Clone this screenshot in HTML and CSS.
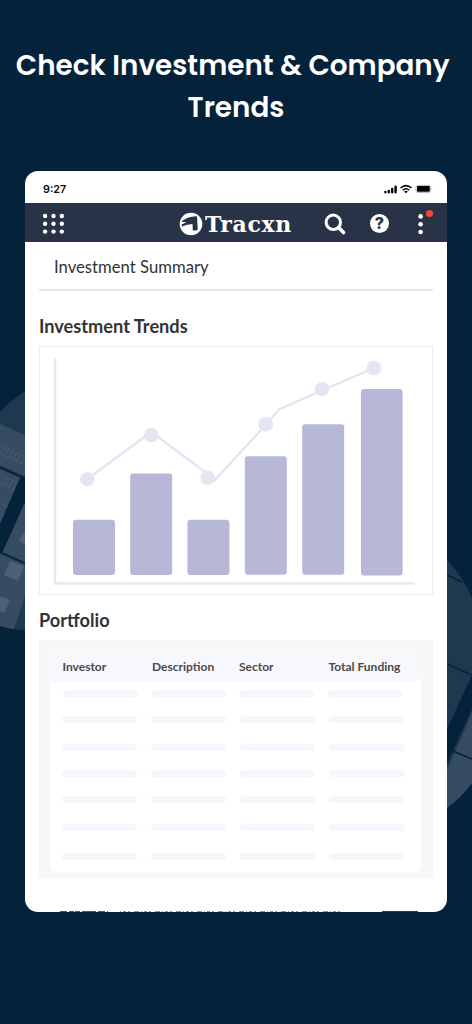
FILE: index.html
```html
<!DOCTYPE html>
<html lang="en">

<head>
    <meta charset="UTF-8">
    <title>Tracxn - Investment Trends</title>
    <meta name="viewport" content="width=device-width,initial-scale=1">
    <link rel="stylesheet" href="styles.css">
</head>

<body>
    <svg class="backdrop" viewBox="0 0 472 1024" aria-hidden="true">
        <!-- left globe -->
        <path fill="#1e384f" d="M0 412Q10 401 25 391V630Q12 630 0 626Z"/>
        <path fill="#364c60" d="M0 424L25 435V476L0 466ZM0 469L20 478L0 524ZM25 502L2 553L25 563ZM0 554L25 565V596L14 629Q6 628 0 626Z"/>
        <path fill="#04223a" d="M20 478L25 476V502L2 553L0 552V524Z"/>
        <path fill="#4d6075" d="M10 561L24 566L18 581L4 575ZM0 596L10 600L4 613L0 611ZM25 530L19 541L25 544Z"/>
        <path fill="none" stroke="#4a5e71" stroke-width=".8" d="M0 446L25 457M0 454L25 465M0 475L18 483M0 483L15 490M0 503L8 507M4 448L1 454M8 450L5 456M12 452L9 458M16 454L13 460M20 456L17 462M24 458L21 464M4 477L1 483M8 479L5 485M12 481L9 487M16 483L13 489"/>
        <path stroke="#04223a" stroke-width="1.6" d="M0 467L22 477M0 552L25 563"/>
        <!-- right globe -->
        <path fill="#1e384f" d="M447 560Q462 575 472 598V783Q460 799 447 808Z"/>
        <path fill="#04223a" d="M472 675V709L447 764V729Z"/>
        <path fill="#364c60" d="M472 713L447 770V808Q460 799 472 783Z"/>
        <path stroke="#04223a" stroke-width="1.6" d="M447 575L462 582M447 664L472 675M453 751L472 759"/>
    </svg>

    <h1 class="headline">Check Investment &amp; Company&nbsp;<br>Trends</h1>

    <main class="phone">
        <div class="status">
            <span class="time">9:27</span>
            <svg width="50" height="10" viewBox="0 0 50 10">
                <path stroke="#000" stroke-width="2.4" stroke-linecap="round" d="M1.400 8.200V8M4.800 8.200V7M8.200 8.200V5M11.600 8.200V2.600"/>
                <g fill="none" stroke="#000" stroke-width="1.5">
                    <path d="M16.500 4Q22 -.8 27.500 4M18.700 6.200Q22 3.400 25.300 6.200"/>
                    <path fill="#000" stroke="none" d="M20.100 7.400Q22 6 23.900 7.400L22 9.300Z"/>
                </g>
                <rect x="32" y="1.300" width="14.600" height="7.200" rx="2" fill="#fff" stroke="#aaa" stroke-width=".8"/>
                <rect x="33" y="2.100" width="12.800" height="5.600" rx="1"/>
                <path fill="#aaa" d="M47.500 3.600Q49.100 4.900 47.500 6.200Z"/>
            </svg>
        </div>

        <header class="navbar">
            <svg width="22" height="22" viewBox="0 0 22 22" fill="#fff">
                <circle cx="2.100" cy="3" r="2.200"/><circle cx="10.500" cy="3" r="2.200"/><circle cx="18.800" cy="3" r="2.200"/>
                <circle cx="2.100" cy="10.800" r="2.200"/><circle cx="10.500" cy="10.800" r="2.200"/><circle cx="18.800" cy="10.800" r="2.200"/>
                <circle cx="2.100" cy="18.600" r="2.200"/><circle cx="10.500" cy="18.600" r="2.200"/><circle cx="18.800" cy="18.600" r="2.200"/>
            </svg>
            <div class="brand">
                <svg width="24" height="24" viewBox="0 0 24 24">
                    <circle cx="12" cy="12" r="11.300" fill="#fff"/>
                    <path fill="#283348" d="M2.200 9.800Q8 4.600 17.300 4.300Q18 4.300 18.100 5L18.700 16.800Q18.700 18.400 17.200 18.400L13.800 18.500L13.500 12.100Q8 12.500 3 14.500L2.500 12.600L7.500 10.200Z"/>
                </svg>
                <span>Tracxn</span>
            </div>
            <div class="actions">
                <svg width="22" height="22" viewBox="0 0 22 22" fill="none" stroke="#fff">
                    <circle cx="9.300" cy="9.300" r="7.200" stroke-width="3"/>
                    <path d="M14.600 14.600L19.500 19.500" stroke-width="3.600" stroke-linecap="round"/>
                </svg>
                <span class="help">?</span>
                <svg width="16" height="28" viewBox="0 0 16 28" fill="#fff">
                    <circle cx="3.600" cy="6.400" r="2.300"/><circle cx="3.600" cy="14.200" r="2.300"/><circle cx="3.600" cy="22" r="2.300"/>
                    <circle cx="12.500" cy="3.500" r="3.500" fill="#f14b35"/>
                </svg>
            </div>
        </header>

        <h2 class="summary">Investment Summary</h2>

        <h3 class="trends-title">Investment Trends</h3>
        <div class="chart">
            <svg width="392" height="247" viewBox="40 347 392 247">
                <path fill="none" stroke="#e9e9ea" stroke-width="2.500" d="M55 358.500V583.500H415"/>
                <path fill="none" stroke="#e4e5f2" stroke-width="2.400" d="M87.300 479L148.500 434H154L207.700 474L214 481L265.700 425L279 409.500L322 390.500L374 368"/>
                <g fill="#e3e5f1">
                    <circle cx="87.300" cy="479.200" r="7.300"/><circle cx="151.300" cy="435" r="7.300"/>
                    <circle cx="207.700" cy="477.800" r="7.300"/><circle cx="265.700" cy="424.400" r="7.300"/>
                    <circle cx="322" cy="389.200" r="7.300"/><circle cx="374" cy="368" r="7.300"/>
                </g>
                <g fill="#b7b7d8">
                    <rect x="73" y="519.700" width="42" height="55.200" rx="3"/>
                    <rect x="130.200" y="473.400" width="42" height="101.500" rx="3"/>
                    <rect x="187.400" y="519.700" width="42" height="55.200" rx="3"/>
                    <rect x="244.800" y="456.200" width="42" height="118.500" rx="3"/>
                    <rect x="302.200" y="424.200" width="42" height="150.500" rx="3"/>
                    <rect x="361" y="389" width="41.600" height="186.600" rx="3"/>
                </g>
            </svg>
        </div>

        <h3 class="portfolio-title">Portfolio</h3>
        <div class="portfolio">
            <div class="table">
                <div class="row head"><span>Investor</span><span>Description</span><span>Sector</span><span>Total Funding</span></div>
                <div class="row first"><i></i><i></i><i></i><i></i></div>
                <div class="row"><i></i><i></i><i></i><i></i></div>
                <div class="row tall"><i></i><i></i><i></i><i></i></div>
                <div class="row"><i></i><i></i><i></i><i></i></div>
                <div class="row"><i></i><i></i><i></i><i></i></div>
                <div class="row tall"><i></i><i></i><i></i><i></i></div>
                <div class="row taller"><i></i><i></i><i></i><i></i></div>
            </div>
        </div>

        <!-- top edge of the next row, cut off by the screen -->
        <svg class="cutoff" width="422" height="1" viewBox="0 0 422 1">
            <path stroke="#32569b" stroke-dasharray="7 2 5 1 5 2 14 2" d="M35 .5H83"/>
            <path stroke="#8c96a2" stroke-dasharray="1 2 3 2 2 4 5 2" d="M95 .5H317"/>
            <path stroke="#263c59" d="M357 .5H393"/>
        </svg>
    </main>
</body>

</html>
```
FILE: styles.css
```css
* {
    margin: 0;
    padding: 0;
    box-sizing: border-box;
}

body {
    width: 472px;
    height: 1024px;
    background-color: #04223a;
    font-family: Lato, sans-serif;
    color: #333;
    overflow: hidden;
}

svg {
    display: block;
    flex: none;
}

.backdrop {
    position: absolute;
    top: 0;
    left: 0;
    width: 472px;
    height: 1024px;
    z-index: -1;
}

.headline {
    height: 171px;
    padding-top: 45px;
    color: #fff;
    font-family: Poppins, Inter, sans-serif;
    font-size: 27.800px;
    font-weight: 600;
    line-height: 42px;
    text-align: center;
    white-space: nowrap;
}

.phone {
    width: 422px;
    height: 741px;
    margin-left: 25px;
    background-color: #fff;
    border-radius: 13px;
    overflow: hidden;
    display: flex;
    flex-direction: column;
}

.status {
    height: 32px;
    padding: 4px 13px 0 18px;
    display: flex;
    justify-content: space-between;
    align-items: center;
}

.time {
    color: #111;
    font-family: Inter, sans-serif;
    font-size: 10.800px;
    font-weight: 600;
}

.navbar {
    height: 39px;
    padding: 3px 14px 0 18px;
    background-color: #283348;
    display: flex;
    align-items: center;
}

.brand {
    margin-left: 114px;
    display: flex;
    align-items: center;
    gap: 2px;
    color: #fff;
    font-family: "DejaVu Serif", serif;
    font-size: 22px;
    font-weight: bold;
    letter-spacing: 0.6px;
    line-height: 24px;
}

.actions {
    margin-left: auto;
    display: flex;
    align-items: center;
}

.help {
    width: 19px;
    height: 19px;
    margin: 0 28px 1px 24px;
    border-radius: 50%;
    background-color: #fff;
    color: #283348;
    font-family: Inter, sans-serif;
    font-size: 16px;
    font-weight: 800;
    line-height: 19px;
    text-align: center;
}

.summary {
    height: 49px;
    margin: 0 14px;
    padding-left: 15px;
    border-bottom: 2px solid #e6e6e7;
    font-size: 16.700px;
    font-weight: 400;
    line-height: 50px;
}

.trends-title,
.portfolio-title {
    padding-left: 14px;
    font-size: 18.200px;
    font-weight: 700;
}

.trends-title {
    height: 55px;
    line-height: 70px;
}

.chart {
    height: 249px;
    margin: 0 14px;
    border: 1px solid #ececec;
}

.portfolio-title {
    height: 45px;
    line-height: 50px;
}

.portfolio {
    height: 238px;
    margin: 0 14px;
    padding: 9px 12px 6px 11px;
    background-color: #f7f7f7;
}

.table {
    height: 223px;
    background-color: #fff;
    border-radius: 5px;
    overflow: hidden;
}

.row {
    height: 26px;
    padding-left: 12px;
    display: grid;
    grid-template-columns: 89px 89px 88.600px 1fr;
    align-items: end;
}

.row.head {
    height: 33px;
    padding-left: 12.500px;
    grid-template-columns: 89.500px 87px 89.500px 1fr;
    background-color: #f7f8fd;
    border-radius: 5px;
    color: #4a4a4a;
    font-size: 12px;
    font-weight: 700;
    line-height: 36px;
    white-space: nowrap;
}

.row.first {
    height: 15px;
    padding-left: 13px;
    grid-template-columns: 89px 87px 89px 1fr;
}

.row.tall {
    height: 28px;
}

.row.taller {
    height: 29px;
}

.row i {
    width: 75px;
    height: 7px;
    border-radius: 4px;
    background-color: #f6f6fc;
}

.cutoff {
    margin-top: auto;
}
```
